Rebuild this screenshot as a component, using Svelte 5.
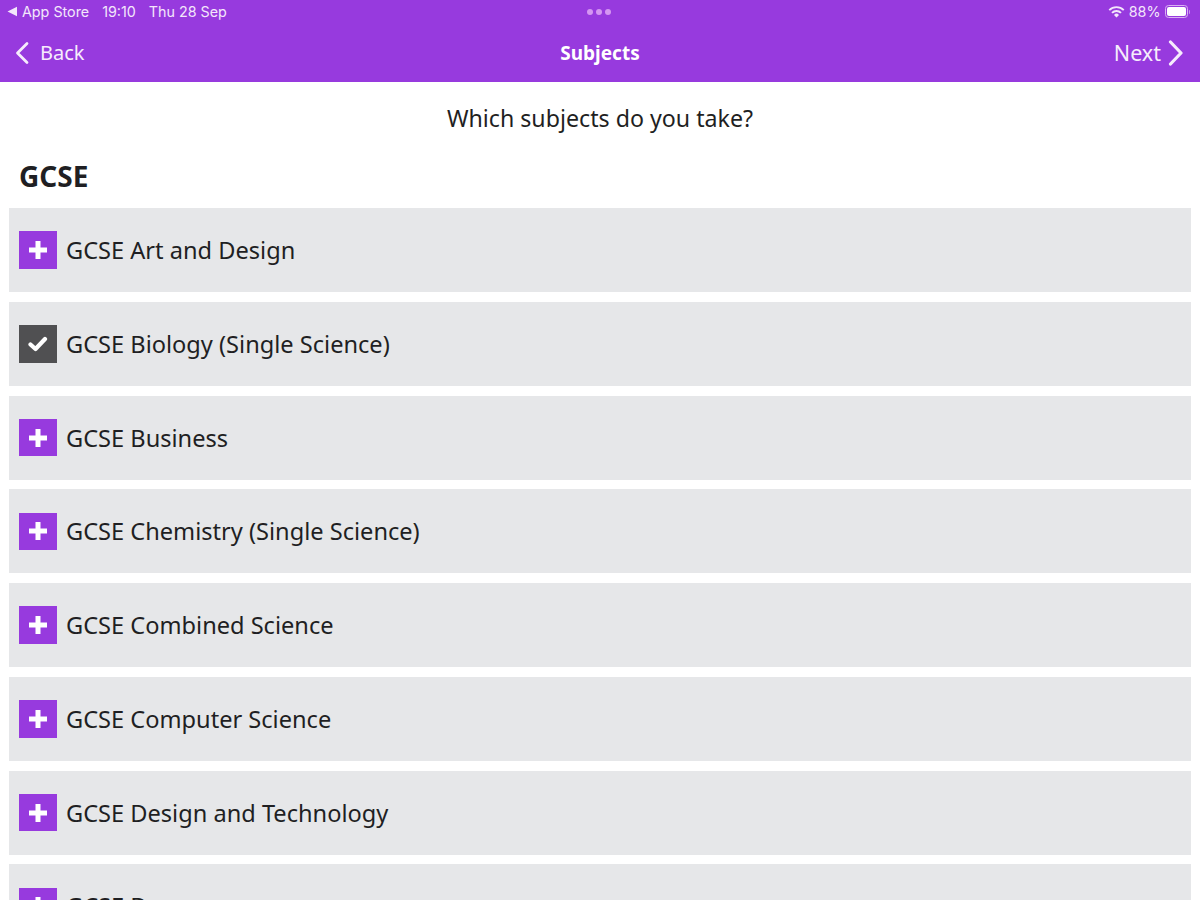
<script lang="ts">
	interface Subject {
		name: string;
		added: boolean;
	}

	const subjects: Subject[] = [
		{ name: 'GCSE Art and Design', added: false },
		{ name: 'GCSE Biology (Single Science)', added: true },
		{ name: 'GCSE Business', added: false },
		{ name: 'GCSE Chemistry (Single Science)', added: false },
		{ name: 'GCSE Combined Science', added: false },
		{ name: 'GCSE Computer Science', added: false },
		{ name: 'GCSE Design and Technology', added: false },
		{ name: 'GCSE Drama', added: false }
	];
</script>

<div class="page">
	<header class="top">
		<div class="status">
			<div class="status-left">
				<svg class="back-tri" width="11" height="11" viewBox="0 0 11 11"><path d="M.5 5.5 10 .8v9.4z" fill="currentColor" /></svg>
				<span>App Store</span>
				<span class="time">19:10</span>
				<span class="date">Thu 28 Sep</span>
			</div>
			<div class="dots"><i></i><i></i><i></i></div>
			<div class="status-right">
				<svg width="17" height="13" viewBox="0 0 17 13">
					<path d="M.6 4.4a11.2 11.2 0 0 1 15.8 0l-1.3 1.4a9.3 9.3 0 0 0-13.2 0zM3.3 7.2a7.4 7.4 0 0 1 10.4 0l-1.4 1.4a5.4 5.4 0 0 0-7.6 0zM6 9.9a3.5 3.5 0 0 1 5 0l-2.5 2.6z" fill="currentColor" />
				</svg>
				<span>88%</span>
				<div class="battery"><div class="charge"></div></div>
				<div class="nub"></div>
			</div>
		</div>
		<nav class="nav">
			<div class="nav-link">
				<svg width="16" height="24" viewBox="0 0 16 24"><path d="M13 2.5 3.5 12l9.5 9.5" fill="none" stroke="currentColor" stroke-width="2.8" stroke-linecap="round" stroke-linejoin="round" /></svg>
				<span>Back</span>
			</div>
			<div class="nav-title">Subjects</div>
			<div class="nav-link next">
				<span>Next</span>
				<svg width="16" height="26" viewBox="0 0 16 26"><path d="M2.5 2l10.5 11-10.5 11" fill="none" stroke="currentColor" stroke-width="3.2" stroke-linecap="round" stroke-linejoin="round" /></svg>
			</div>
		</nav>
	</header>

	<main class="content">
		<p class="question">Which subjects do you take?</p>
		<h2 class="group">GCSE</h2>
		<ul class="list">
			{#each subjects as subject}
				<li class="row">
					<span class="box" class:added={subject.added}>
						{#if subject.added}
							<svg width="20" height="16" viewBox="0 0 20 16"><path d="M2.5 8.5 7.5 13 17 3" fill="none" stroke="#fff" stroke-width="4.2" stroke-linejoin="round" stroke-linecap="round" /></svg>
						{:else}
							<svg width="20" height="20" viewBox="0 0 20 20"><path d="M10 1v18M1 10h18" fill="none" stroke="#fff" stroke-width="5" /></svg>
						{/if}
					</span>
					<span class="name">{subject.name}</span>
				</li>
			{/each}
		</ul>
	</main>
</div>

<style>
	:global(body) {
		margin: 0;
		background: #fff;
	}

	.page {
		width: 1200px;
		height: 900px;
		overflow: hidden;
		font-family: 'Noto Sans', sans-serif;
		color: #1f1f23;
	}

	.top {
		height: 82px;
		background: #973ade;
		color: #fff;
		display: flex;
		flex-direction: column;
	}

	.status {
		height: 23px;
		padding: 0 10px 0 7px;
		display: flex;
		align-items: center;
		justify-content: space-between;
		font-family: Inter, sans-serif;
		font-size: 14.3px;
		color: #f3e6fb;
		position: relative;
	}

	.status-left {
		display: flex;
		align-items: center;
		gap: 4px;
	}

	.time {
		margin-left: 9px;
	}

	.date {
		margin-left: 9px;
	}

	.dots {
		position: absolute;
		left: 587px;
		top: 9px;
		display: flex;
		gap: 3px;
	}

	.dots i {
		width: 6px;
		height: 6px;
		border-radius: 50%;
		background: #d596f2;
	}

	.status-right {
		display: flex;
		align-items: center;
		gap: 4px;
	}

	.battery {
		width: 23px;
		height: 13px;
		box-sizing: border-box;
		border: 1px solid #d9b0f2;
		border-radius: 3.5px;
		padding: 1px;
	}

	.charge {
		width: 100%;
		height: 100%;
		background: #fff;
		border-radius: 2px;
	}

	.nub {
		width: 1.5px;
		height: 4px;
		margin-left: -3px;
		background: #c994ec;
		border-radius: 0 1px 1px 0;
	}

	.nav {
		flex: 1;
		padding: 0 16px 0 14px;
		display: flex;
		align-items: center;
		justify-content: space-between;
		position: relative;
	}

	.nav-link {
		display: flex;
		align-items: center;
		gap: 10px;
		font-size: 20px;
		color: #f6ecfc;
	}

	.nav-link.next {
		font-size: 21.5px;
		gap: 7px;
	}

	.nav-title {
		position: absolute;
		left: 0;
		right: 0;
		text-align: center;
		font-size: 19px;
		font-weight: 700;
	}

	.content {
		padding: 0 9px;
	}

	.question {
		margin: 0;
		padding-top: 20px;
		text-align: center;
		font-size: 23.2px;
		line-height: 33px;
	}

	.group {
		margin: 0;
		padding: 21px 0 0 10px;
		font-size: 28px;
		line-height: 40px;
		font-weight: 700;
	}

	.list {
		list-style: none;
		margin: 12px 0 0;
		padding: 0;
		display: flex;
		flex-direction: column;
		gap: 9.75px;
	}

	.row {
		height: 84px;
		flex: none;
		background: #e6e7e9;
		padding-left: 10px;
		display: flex;
		align-items: center;
		gap: 9.5px;
	}

	.box {
		width: 37.5px;
		height: 37.5px;
		flex: none;
		background: #973ade;
		display: flex;
		align-items: center;
		justify-content: center;
	}

	.box.added {
		background: #505052;
	}

	.name {
		font-size: 23.6px;
	}
</style>
